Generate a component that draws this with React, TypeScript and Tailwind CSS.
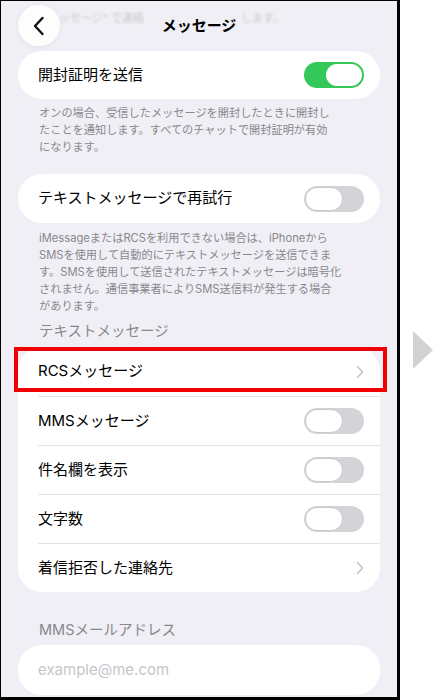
import { type ReactNode } from 'react'

const font = { fontFamily: 'Inter, "Noto Sans CJK JP", sans-serif' }

function Toggle({ on }: { on: boolean }) {
  if (on) {
    return (
      <div className="w-[60px] h-[26px] rounded-full bg-[#34c759] flex items-center justify-end px-[2px]">
        <div className="w-[36px] h-[22px] rounded-full bg-white" />
      </div>
    )
  }
  return (
    <div className="w-[60px] h-[26px] rounded-full bg-[#d4d4d8] flex items-center px-[1px]">
      <div className="w-[38px] h-[24px] rounded-full bg-white border border-[#c9c9cd]" />
    </div>
  )
}

function Chevron() {
  return (
    <svg width="8" height="14" viewBox="0 0 8 14" fill="none">
      <polyline points="1.5,1.5 6.5,7 1.5,12.5" stroke="#c4c4c8" strokeWidth="1.6" strokeLinecap="round" strokeLinejoin="round" />
    </svg>
  )
}

function Row({ label, right, first, children }: { label: string; right: ReactNode; first?: boolean; children?: ReactNode }) {
  return (
    <div className="relative h-[49px] pl-[20px]">
      <div className={`h-full flex items-center justify-between pr-[16px] ${first ? '' : 'border-t border-[#e2e2e6]'}`}>
        <span className="text-[15px] text-black">{label}</span>
        {right}
      </div>
      {children}
    </div>
  )
}

export default function App() {
  return (
    <div className="w-[440px] h-[700px] bg-white flex" style={font}>
      {/* phone screenshot */}
      <div className="relative w-[400px] h-[700px] bg-[#f0eff5] border-black border-l border-t border-r-[3px] border-b-[3px] overflow-hidden px-[17px] flex flex-col">
        {/* faded content scrolled under the header */}
        <div className="absolute left-[58px] top-[9px] text-[11px] text-[#cacacf] blur-[1px] whitespace-nowrap">
          ッセージ" で連絡
        </div>
        <div className="absolute left-[240px] top-[9px] text-[11px] text-[#cacacf] blur-[1px] whitespace-nowrap">
          します。
        </div>

        {/* header */}
        <div className="relative h-[45px] pt-[4px] flex items-center">
          <div className="w-[42px] h-[41px] rounded-full bg-white/90 shadow-[0_1px_6px_rgba(0,0,0,0.06)] flex items-center justify-center">
            <svg width="12" height="20" viewBox="0 0 12 20" fill="none">
              <polyline points="9.5,2 2,10 9.5,18" stroke="#111" strokeWidth="2.4" strokeLinecap="round" strokeLinejoin="round" />
            </svg>
          </div>
          <div className="absolute left-0 right-0 top-[14px] text-center text-[15px] font-semibold text-black">
            メッセージ
          </div>
        </div>

        {/* read receipts */}
        <div className="mt-[5px] h-[48px] rounded-[24px] bg-white pl-[20px] pr-[16px] flex items-center justify-between">
          <span className="text-[15px] text-black">開封証明を送信</span>
          <Toggle on />
        </div>
        <p className="mt-[6px] px-[21px] text-[11.2px] leading-[17px] text-[#88888d] whitespace-nowrap">
          オンの場合、受信したメッセージを開封したときに開封し
          <br />
          たことを通知します。すべてのチャットで開封証明が有効
          <br />
          になります。
        </p>

        {/* send as text */}
        <div className="mt-[18px] h-[49px] rounded-[24px] bg-white pl-[20px] pr-[16px] flex items-center justify-between">
          <span className="text-[15px] text-black">テキストメッセージで再試行</span>
          <Toggle on={false} />
        </div>
        <p className="mt-[7px] px-[21px] text-[11.2px] leading-[17px] text-[#88888d] whitespace-nowrap">
          iMessageまたはRCSを利用できない場合は、iPhoneから
          <br />
          SMSを使用して自動的にテキストメッセージを送信できま
          <br />
          す。SMSを使用して送信されたテキストメッセージは暗号化
          <br />
          されません。通信事業者によりSMS送信料が発生する場合
          <br />
          があります。
        </p>

        {/* text messages section */}
        <div className="mt-[6px] px-[21px] text-[14.5px] leading-[20px] text-[#88888d]">テキストメッセージ</div>
        <div className="mt-[6px] rounded-[24px] bg-white">
          <Row label="RCSメッセージ" right={<Chevron />} first>
            <div className="absolute left-[-4px] top-0 w-[373px] h-[45px] border-[4px] border-[#f00000]" />
          </Row>
          <Row label="MMSメッセージ" right={<Toggle on={false} />} />
          <Row label="件名欄を表示" right={<Toggle on={false} />} />
          <Row label="文字数" right={<Toggle on={false} />} />
          <Row label="着信拒否した連絡先" right={<Chevron />} />
        </div>

        {/* mms address */}
        <div className="mt-[28px] px-[21px] text-[14.5px] leading-[20px] text-[#88888d]">MMSメールアドレス</div>
        <div className="mt-[5px] h-[50px] shrink-0 rounded-[24px] bg-white pl-[20px] flex items-center">
          <span className="text-[15px] text-[#c5c5c9]">example@me.com</span>
        </div>
      </div>

      {/* next arrow */}
      <div className="flex-1 flex items-center pl-[13px]">
        <div className="w-0 h-0 border-y-[19px] border-y-transparent border-l-[20px] border-l-[#d2d2d2]" />
      </div>
    </div>
  )
}
